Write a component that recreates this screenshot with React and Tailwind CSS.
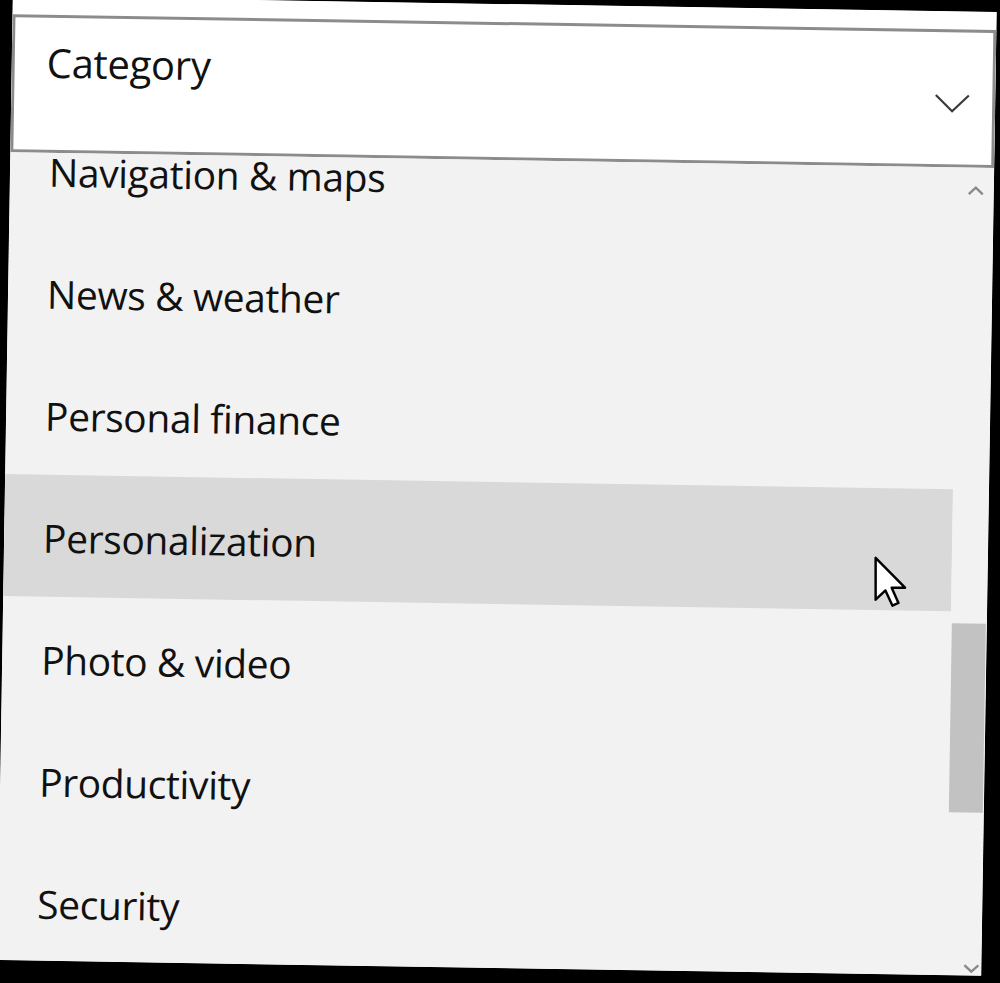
import React from "react";

const items = [
  "Navigation & maps",
  "News & weather",
  "Personal finance",
  "Personalization",
  "Photo & video",
  "Productivity",
  "Security",
];

const Cursor = () => (
  <svg width="34" height="52" viewBox="0 0 12.5 19" className="absolute left-[874px] top-[556px]">
    <path
      d="M0.6 0.6 L0.6 16 L4.2 12.6 L6.8 18.2 L9 17.2 L6.5 11.6 L11.4 11.6 Z"
      fill="#fff"
      stroke="#000"
      strokeWidth="0.9"
      strokeLinejoin="round"
    />
  </svg>
);

const App = () => {
  return (
    <div className="relative w-[1000px] h-[983px] bg-black overflow-hidden font-['Open_Sans',sans-serif] text-[#111]">
      <div className="ml-[5px] mt-[4px] w-[984px] h-[964px] rotate-[0.92deg] bg-white flex flex-col overflow-hidden">
        {/* strip above the box */}
        <div className="h-[18px] shrink-0 bg-white" />

        {/* Combo box */}
        <div className="h-[138px] shrink-0 border-[3px] border-[#8c8c8c] bg-white flex justify-between">
          <div className="pl-[32px] pt-[18px] text-[40px] leading-[54px] tracking-[-0.3px]">Category</div>
          <div className="pr-[22px] flex items-center pt-[10px]">
            <svg width="36" height="20" viewBox="0 0 36 20">
              <path d="M1.5 2 L18 18 L34.5 2" fill="none" stroke="#3a3a3a" strokeWidth="2.2" />
            </svg>
          </div>
        </div>

        {/* Dropdown list */}
        <div className="flex-1 flex bg-[#f2f2f2] overflow-hidden">
          <div className="w-[948px] overflow-hidden">
            <div className="-mt-[44px]">
              {items.map((name) => (
                <div
                  key={name}
                  className={
                    "h-[122px] flex items-center pl-[39px] pt-[3px] text-[39px] leading-[54px] tracking-[-0.4px] " +
                    (name === "Personalization" ? "bg-[#d9d9d9]" : "")
                  }
                >
                  {name}
                </div>
              ))}
            </div>
          </div>

          {/* scrollbar */}
          <div className="w-[36px] flex flex-col items-center">
            <svg width="18" height="10" viewBox="0 0 18 10" className="mt-[18px]">
              <path d="M2 8.5 L9 2 L16 8.5" fill="none" stroke="#8a8a8a" strokeWidth="2.4" />
            </svg>
            <div className="mt-[428px] w-[34px] h-[189px] bg-[#c2c2c2]" />
            <div className="flex-1" />
            <svg width="18" height="10" viewBox="0 0 18 10" className="mb-[2px] ml-[16px]">
              <path d="M2 1.5 L9 8 L16 1.5" fill="none" stroke="#8a8a8a" strokeWidth="2.4" />
            </svg>
          </div>
        </div>
      </div>

      <Cursor />
    </div>
  );
};

export default App;
